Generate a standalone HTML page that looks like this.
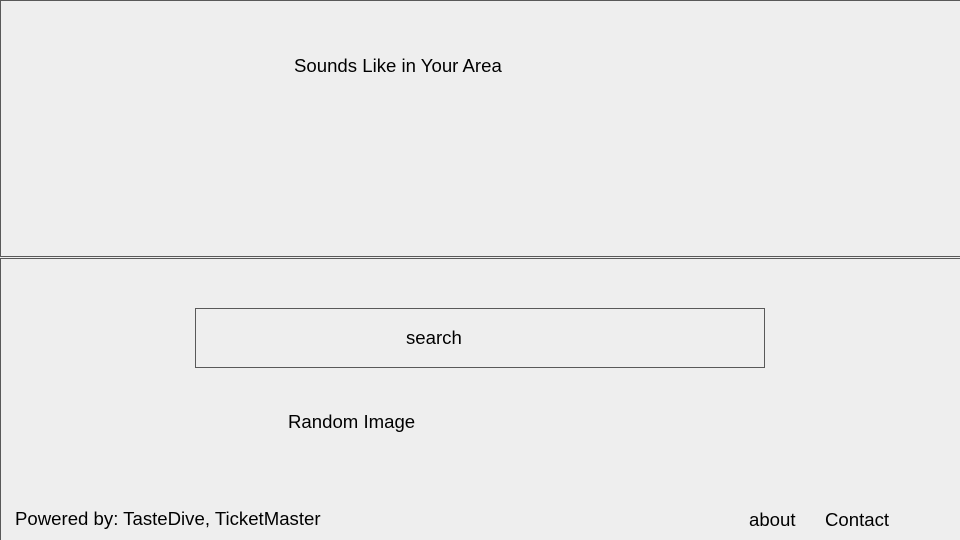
<!DOCTYPE html>
<html style="overflow:hidden;width:960px;height:540px"><head><style>
body{margin:0;width:960px;height:540px;background:#eeeeee;position:relative;overflow:hidden;font-family:"Liberation Sans",Arial,sans-serif;color:#000}
.b{position:absolute;border:1px solid #595959;box-sizing:border-box}
.t{position:absolute;font-size:18.6px;white-space:nowrap;line-height:1}
</style></head><body>
<div class="b" style="left:0;top:0;width:970px;height:257px"></div>
<div class="b" style="left:0;top:258px;width:970px;height:290px"></div>
<div class="b" style="left:195px;top:308px;width:570px;height:60px"></div>
<div class="t" style="left:294px;top:57px">Sounds Like in Your Area</div>
<div class="t" style="left:406px;top:329px">search</div>
<div class="t" style="left:288px;top:413px">Random Image</div>
<div class="t" style="left:15px;top:510px">Powered by: TasteDive, TicketMaster</div>
<div class="t" style="left:749px;top:511px">about</div>
<div class="t" style="left:825px;top:511px">Contact</div>
</body></html>
